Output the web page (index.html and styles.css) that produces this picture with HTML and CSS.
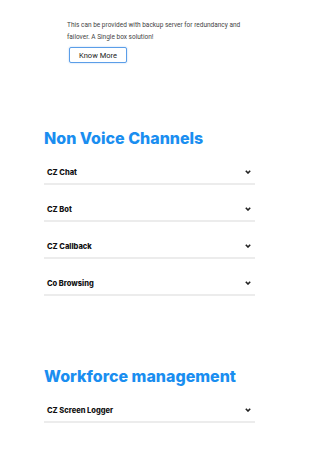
FILE: index.html
```html
<!DOCTYPE html>
<html lang="en">
<head>
    <meta charset="UTF-8">
    <meta name="viewport" content="width=device-width, initial-scale=1.0">
    <title>Channels</title>
    <link rel="stylesheet" href="styles.css">
</head>
<body>

    <div class="intro">
        <p>This can be provided with backup server for redundancy and failover. A Single box solution!</p>
        <button class="know-more">Know More</button>
    </div>

    <div class="group">
        <h2>Non Voice Channels</h2>
        <div class="row"><span>CZ Chat</span><svg class="chev" viewBox="0 0 6 4"><polyline points="0.8,0.8 3,3 5.2,0.8"/></svg></div>
        <div class="row"><span>CZ Bot</span><svg class="chev" viewBox="0 0 6 4"><polyline points="0.8,0.8 3,3 5.2,0.8"/></svg></div>
        <div class="row"><span>CZ Callback</span><svg class="chev" viewBox="0 0 6 4"><polyline points="0.8,0.8 3,3 5.2,0.8"/></svg></div>
        <div class="row"><span>Co Browsing</span><svg class="chev" viewBox="0 0 6 4"><polyline points="0.8,0.8 3,3 5.2,0.8"/></svg></div>
    </div>

    <div class="group second">
        <h2>Workforce management</h2>
        <div class="row"><span>CZ Screen Logger</span><svg class="chev" viewBox="0 0 6 4"><polyline points="0.8,0.8 3,3 5.2,0.8"/></svg></div>
    </div>

</body>
</html>
```

FILE: styles.css
```css
body {
    margin: 0;
    background: #fff;
    font-family: Roboto, "Liberation Sans", sans-serif;
    color: #333;
}
.intro {
    padding: 19px 0 0 67px;
}
.intro p {
    margin: 0;
    width: 190px;
    font-size: 6.5px;
    line-height: 12px;
    color: #444;
}
.know-more {
    display: block;
    margin: 4px 0 0 2px;
    width: 58px;
    height: 16px;
    padding: 0;
    background: #fff;
    border: 1px solid #5b9ee8;
    border-radius: 2px;
    box-shadow: 0 0 2px rgba(60, 140, 230, 0.4);
    font-family: Roboto, "Liberation Sans", sans-serif;
    font-size: 7.5px;
    color: #222;
}
.group {
    margin: 65px 0 0 44px;
    width: 211px;
}
.group.second {
    margin-top: 70px;
}
h2 {
    margin: 0;
    font-family: Inter, "DejaVu Sans", sans-serif;
    font-weight: 800;
    font-size: 16px;
    line-height: 20px;
    color: #1a8ef0;
}
.row {
    display: flex;
    justify-content: space-between;
    align-items: center;
    margin-top: 19px;
    padding: 0 4px 6px 3px;
    height: 10px;
    border-bottom: 2px solid #ececec;
    font-family: Inter, "DejaVu Sans", sans-serif;
    font-weight: 800;
    font-size: 7.5px;
    color: #111;
}
.chev {
    width: 6px;
    height: 4px;
    fill: none;
    stroke: #222;
    stroke-width: 1.6;
}
```
